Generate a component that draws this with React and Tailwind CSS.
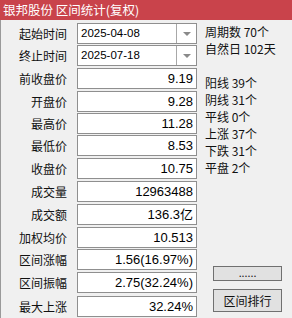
import React from "react";

const CJK = { fontFamily: '"Noto Sans CJK SC", "Noto Sans", sans-serif' };

const rows = [
  { label: "起始时间", value: "2025-04-08", combo: true, mt: "mt-[3px]" },
  { label: "终止时间", value: "2025-07-18", combo: true, mt: "mt-[1px]" },
  { label: "前收盘价", value: "9.19", mt: "mt-[2px]" },
  { label: "开盘价", value: "9.28", mt: "mt-[2px]" },
  { label: "最高价", value: "11.28", mt: "mt-[1px]" },
  { label: "最低价", value: "8.53", mt: "mt-[1px]" },
  { label: "收盘价", value: "10.75", mt: "mt-[2px]" },
  { label: "成交量", value: "12963488", mt: "mt-[2px]" },
  { label: "成交额", value: "136.3亿", mt: "mt-[2px]" },
  { label: "加权均价", value: "10.513", mt: "mt-[2px]" },
  { label: "区间涨幅", value: "1.56(16.97%)", mt: "mt-[1px]" },
  { label: "区间振幅", value: "2.75(32.24%)", mt: "mt-[2px]" },
  { label: "最大上涨", value: "32.24%", mt: "mt-[3px]" },
];

function Row({ label, value, combo, mt }) {
  return (
    <div className={`flex items-center h-[21px] ${mt}`}>
      <div
        className="w-[66px] text-right text-[12px] text-[#111] leading-none"
        style={CJK}
      >
        {label}
      </div>
      <div className="ml-[10px] w-[120px] h-[21px] bg-white border border-[#8f8f8f] flex items-center">
        {combo ? (
          <>
            <div
              className="flex-1 pl-[3px] text-[11.5px] text-black leading-none"
              style={{ fontFamily: '"Liberation Sans", Arial, sans-serif' }}
            >
              {value}
            </div>
            <div className="w-[20px] h-full border-l border-[#a8a8a8] flex items-center justify-center">
              <div className="w-0 h-0 border-l-[4px] border-r-[4px] border-t-[4px] border-l-transparent border-r-transparent border-t-[#8a8a8a]" />
            </div>
          </>
        ) : (
          <div
            className="flex-1 pr-[3px] text-right text-[13px] text-black leading-none"
            style={{
              fontFamily:
                '"Liberation Sans", "Noto Sans CJK SC", Arial, sans-serif',
            }}
          >
            {value}
          </div>
        )}
      </div>
    </div>
  );
}

export default function App() {
  const stats = ["阳线 39个", "阴线 31个", "平线 0个", "上涨 37个", "下跌 31个", "平盘 2个"];
  return (
    <div className="w-[292px] h-[318px] overflow-hidden bg-[#f0f0f0] flex flex-col">
      <div className="h-[20px] bg-[#c9434b] flex items-center pl-[3px] shrink-0">
        <span className="text-white text-[12.5px] leading-none" style={CJK}>
          银邦股份 区间统计(复权)
        </span>
      </div>
      <div className="flex flex-1 border-l border-[#9a9a9a]">
        <div className="flex flex-col w-[196px]">
          {rows.map((r) => (
            <Row key={r.label} {...r} />
          ))}
        </div>
        <div className="flex flex-col flex-1 pl-[8px]">
          <div
            className="pt-[3px] text-[12px] leading-[17px] text-[#111]"
            style={CJK}
          >
            <div>周期数 70个</div>
            <div>自然日 102天</div>
            <div className="h-[17px]" />
            {stats.map((s) => (
              <div key={s}>{s}</div>
            ))}
          </div>
          <div className="mt-auto mb-[6px] flex flex-col ml-[8px] w-[69px]">
            <button className="h-[15px] bg-[#e1e1e1] border border-[#707070] text-[11px] leading-none text-[#111] flex items-center justify-center pb-[3px]">
              ......
            </button>
            <button
              className="mt-[8px] h-[23px] bg-[#e1e1e1] border border-[#707070] text-[12px] leading-none text-[#111] flex items-center justify-center"
              style={CJK}
            >
              区间排行
            </button>
          </div>
        </div>
      </div>
    </div>
  );
}
